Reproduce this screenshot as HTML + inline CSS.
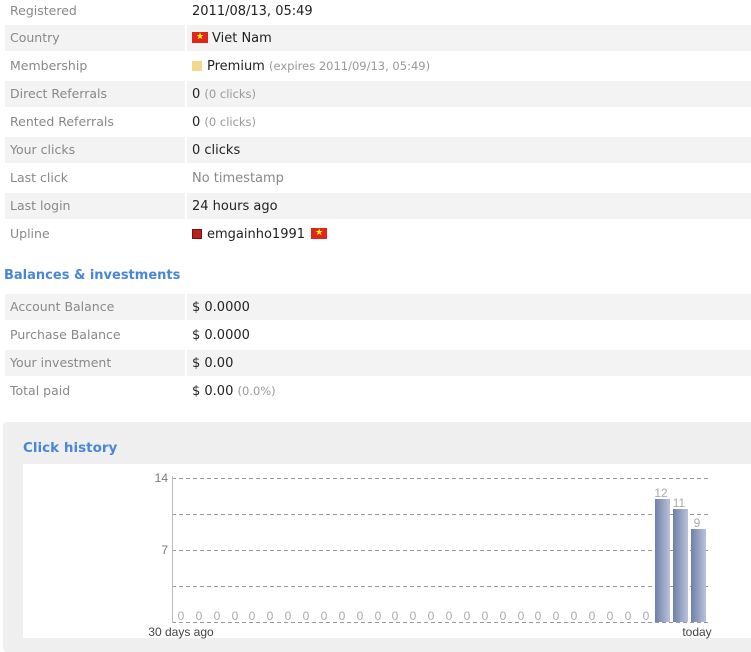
<!DOCTYPE html>
<html><head><meta charset="utf-8"><style>
body{margin:0;width:751px;height:641px;overflow:hidden;background:#fff;font-family:"DejaVu Sans",Tahoma,sans-serif;font-size:13px;position:relative}
.r{position:absolute;left:5px;width:746px;height:26px}
.l{position:absolute;left:0;top:0;width:180px;height:26px;line-height:26px;padding-left:5px;box-sizing:border-box;color:#888;font-size:12.5px}
.v{position:absolute;left:182px;right:0;top:0;height:26px;line-height:27px;padding-left:5px;color:#222}
.g .l,.g .v{background:#f3f3f3}
.s{color:#999;font-size:11.5px}
.flag{display:inline-block;width:16px;height:11px;background:#e0261c;vertical-align:-1px;position:relative;margin-right:4px}
.flag:after{content:"★";position:absolute;left:4px;top:-2px;font-size:9px;color:#ff0;line-height:14px}
h2{position:absolute;margin:0;font-size:13px;font-weight:bold;color:#4a86d8;font-family:"DejaVu Sans",sans-serif}
</style></head><body>
<div class="r" style="top:-2px"><div class="l">Registered</div><div class="v">2011/08/13, 05:49</div></div>
<div class="r g" style="top:25px"><div class="l">Country</div><div class="v"><span class="flag"></span>Viet Nam</div></div>
<div class="r" style="top:53px"><div class="l">Membership</div><div class="v"><span style="display:inline-block;width:10px;height:10px;background:#f2d88a;margin-right:5px;vertical-align:-1px"></span>Premium <span class="s">(expires 2011/09/13, 05:49)</span></div></div>
<div class="r g" style="top:81px"><div class="l">Direct Referrals</div><div class="v">0 <span class="s">(0 clicks)</span></div></div>
<div class="r" style="top:109px"><div class="l">Rented Referrals</div><div class="v">0 <span class="s">(0 clicks)</span></div></div>
<div class="r g" style="top:137px"><div class="l">Your clicks</div><div class="v">0 clicks</div></div>
<div class="r" style="top:165px"><div class="l">Last click</div><div class="v" style="color:#888">No timestamp</div></div>
<div class="r g" style="top:193px"><div class="l">Last login</div><div class="v">24 hours ago</div></div>
<div class="r" style="top:221px"><div class="l">Upline</div><div class="v"><span style="display:inline-block;width:10px;height:10px;background:#b5231f;border:1px solid #7a1010;box-sizing:border-box;margin-right:5px;vertical-align:-1px"></span>emgainho1991 <span class="flag" style="margin-left:2px"></span></div></div>
<h2 style="left:4px;top:268px">Balances &amp; investments</h2>
<div class="r g" style="top:294px"><div class="l">Account Balance</div><div class="v">$ 0.0000</div></div>
<div class="r" style="top:322px"><div class="l">Purchase Balance</div><div class="v">$ 0.0000</div></div>
<div class="r g" style="top:350px"><div class="l">Your investment</div><div class="v">$ 0.00</div></div>
<div class="r" style="top:378px"><div class="l">Total paid</div><div class="v">$ 0.00 <span class="s">(0.0%)</span></div></div>
<div style="position:absolute;left:3px;top:422px;width:760px;height:230px;background:#efefef;border-radius:4px"></div>
<h2 style="left:23px;top:440px;font-size:13.5px">Click history</h2>
<div style="position:absolute;left:23px;top:464px;width:740px;height:174px;background:#fff"></div>
<svg style="position:absolute;left:0;top:0" width="751" height="641">
<defs><linearGradient id="b" x1="0" x2="1"><stop offset="0" stop-color="#6f7fa8"/><stop offset="1" stop-color="#b9c3da"/></linearGradient></defs>
<g stroke="#999" stroke-dasharray="4,3" stroke-width="1">
<line x1="172" y1="478.5" x2="708" y2="478.5"/><line x1="172" y1="514.5" x2="708" y2="514.5"/><line x1="172" y1="550.5" x2="708" y2="550.5"/><line x1="172" y1="586.5" x2="708" y2="586.5"/><line x1="172" y1="622.5" x2="708" y2="622.5"/></g>
<line x1="172.5" y1="476" x2="172.5" y2="623" stroke="#bbb"/>
<g font-family="Liberation Sans,sans-serif" font-size="12" fill="#777">
<text x="168" y="482" text-anchor="end">14</text><text x="168" y="554" text-anchor="end">7</text>
<text x="181" y="636" text-anchor="middle" fill="#444">30 days ago</text><text x="697" y="636" text-anchor="middle" fill="#444">today</text>
<g fill="#aaa" text-anchor="middle">
<text x="181" y="620">0</text><text x="199" y="620">0</text><text x="217" y="620">0</text><text x="235" y="620">0</text><text x="252" y="620">0</text><text x="270" y="620">0</text><text x="288" y="620">0</text><text x="306" y="620">0</text><text x="324" y="620">0</text><text x="342" y="620">0</text><text x="360" y="620">0</text><text x="378" y="620">0</text><text x="395" y="620">0</text><text x="413" y="620">0</text><text x="431" y="620">0</text><text x="449" y="620">0</text><text x="467" y="620">0</text><text x="485" y="620">0</text><text x="503" y="620">0</text><text x="521" y="620">0</text><text x="538" y="620">0</text><text x="556" y="620">0</text><text x="574" y="620">0</text><text x="592" y="620">0</text><text x="610" y="620">0</text><text x="628" y="620">0</text><text x="646" y="620">0</text>
<text x="661" y="497">12</text><text x="679" y="507">11</text><text x="697" y="527">9</text></g></g>
<rect x="655" y="499" width="15" height="123" fill="url(#b)"/>
<rect x="673" y="509" width="15" height="113" fill="url(#b)"/>
<rect x="691" y="529" width="15" height="93" fill="url(#b)"/>
</svg>
</body></html>
